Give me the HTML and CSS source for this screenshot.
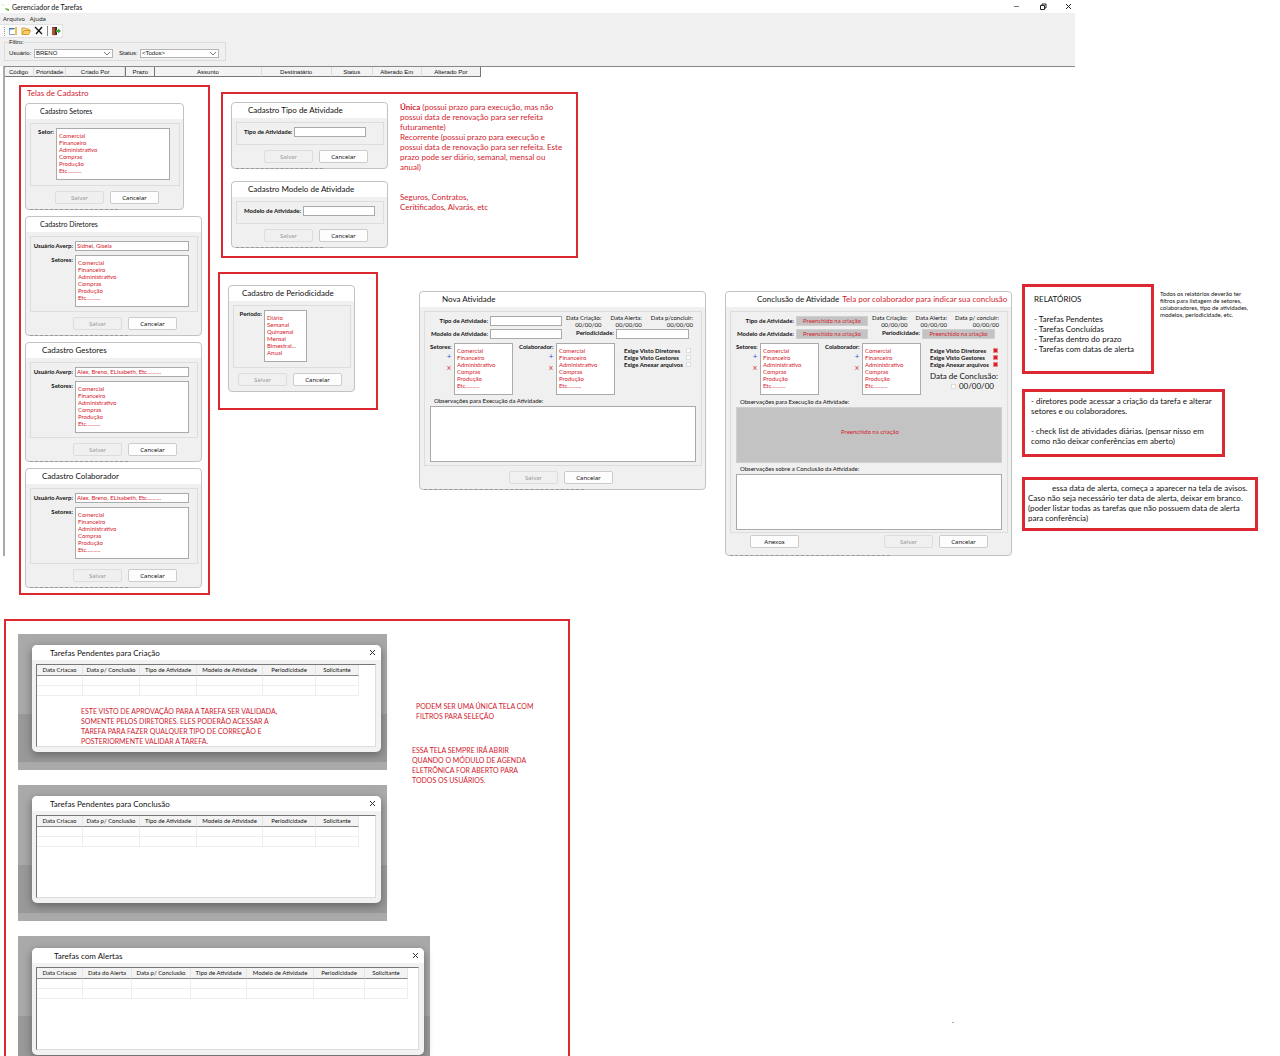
FILE: index.html
```html
<!DOCTYPE html>
<html lang="pt-BR">
<head>
<meta charset="utf-8">
<title>Gerenciador de Tarefas</title>
<link rel="stylesheet" href="styles.css">
</head>
<body>
<div class="page">
<header class="app">
  <div class="titlebar">
    <svg class="logo" width="10" height="8" viewBox="0 0 10 8"><path d="M0 1l4 2" stroke="#dfe8d8" fill="none"/><path d="M4 5l4 1v2l-3-1z" fill="#6cb33f"/></svg>
    <span class="apptitle">Gerenciador de Tarefas</span>
    <div class="winbtns">
      <svg width="8" height="8" viewBox="0 0 8 8"><path d="M1 3.500h5" stroke="#777" fill="none"/></svg>
      <svg width="8" height="8" viewBox="0 0 8 8"><path d="M1.500 2.500h4v4h-4zM3 2V1h4v4H6" stroke="#222" fill="none"/></svg>
      <svg width="8" height="8" viewBox="0 0 8 8"><path d="M1 1l5 5M6 1L1 6" stroke="#222" fill="none"/></svg>
    </div>
  </div>
  <nav class="menubar"><a href="#">Arquivo</a><a href="#">Ajuda</a></nav>
  <div class="toolbar">
    <i class="grip"></i>
    <button aria-label="Novo"><svg width="10" height="10" viewBox="0 0 10 10"><path d="M1.500 2.500h6v6h-6z" fill="#fff" stroke="#8ba3b8"/><path d="M1 2h5v1.500H1z" fill="#3b7fc4"/><path d="M7 1h2v8H7z" fill="#f0c050"/></svg></button>
    <button aria-label="Abrir"><svg width="10" height="10" viewBox="0 0 10 10"><path d="M1 8V2h3l1 1h3v2" fill="#fbe3a0" stroke="#d99a2b"/><path d="M1 8.500l2-4h6.500l-2 4z" fill="#f9cf6b" stroke="#d99a2b"/></svg></button>
    <button aria-label="Excluir"><svg width="10" height="10" viewBox="0 0 10 10"><path d="M1 1l7 7M8 1L2 8" stroke="#111" stroke-width="1.300" fill="none"/></svg></button>
    <i class="sep"></i>
    <button aria-label="Sair"><svg width="10" height="10" viewBox="0 0 10 10"><path d="M1 1h5v8H1z" fill="#333"/><path d="M1 1l3 1v7.500L1 9z" fill="#b5502e"/><path d="M5 4h2V2.500L10 5 7 7.500V6H5z" fill="#3ba53b"/></svg></button>
  </div>
  <fieldset class="filter">
    <legend>Filtro:</legend>
    <label for="fu">Usuário:</label><select id="fu"><option>BRENO</option></select>
    <label for="fs" class="second">Status:</label><select id="fs"><option>&lt;Todos&gt;</option></select>
  </fieldset>
</header>
<main class="sheet">
  <table class="tasks">
    <colgroup><col class="w30"><col class="w32"><col class="w59"><col class="w30"><col class="w106"><col class="w70"><col class="w41"><col class="w49"><col class="w59"></colgroup>
    <tr><th>Código</th><th>Prioridade</th><th>Criado Por</th><th class="cut">Prazo</th><th>Assunto</th><th>Destinatário</th><th>Status</th><th>Alterado Em</th><th>Alterado Por</th></tr>
  </table>

  <div class="board">
    <section class="group cadastros">
      <h2>Telas de Cadastro</h2>
      <form class="dlg setores">
        <h3 class="small">Cadastro Setores</h3>
        <div class="panel">
          <div class="row"><label for="s1">Setor:</label><textarea id="s1">Comercial
Financeiro
Administrativo
Compras
Produção
Etc..........</textarea></div>
        </div>
        <div class="actions"><button type="button" disabled>Salvar</button><button type="button">Cancelar</button></div>
      </form>
      <form class="dlg usuario">
        <h3 class="small">Cadastro Diretores</h3>
        <div class="panel">
          <div class="row"><label for="u2">Usuário Averp:</label><input id="u2" value="Sidnei, Gisela"></div>
          <div class="row"><label for="s2">Setores:</label><textarea id="s2">Comercial
Financeiro
Administrativo
Compras
Produção
Etc..........</textarea></div>
        </div>
        <div class="actions"><button type="button" disabled>Salvar</button><button type="button">Cancelar</button></div>
      </form>
      <form class="dlg usuario">
        <h3>Cadastro Gestores</h3>
        <div class="panel">
          <div class="row"><label for="u3">Usuário Averp:</label><input id="u3" value="Alex, Breno, ELisabeth, Etc.........."></div>
          <div class="row"><label for="s3">Setores:</label><textarea id="s3">Comercial
Financeiro
Administrativo
Compras
Produção
Etc..........</textarea></div>
        </div>
        <div class="actions"><button type="button" disabled>Salvar</button><button type="button">Cancelar</button></div>
      </form>
      <form class="dlg usuario">
        <h3>Cadastro Colaborador</h3>
        <div class="panel">
          <div class="row"><label for="u4">Usuário Averp:</label><input id="u4" value="Alex, Breno, ELisabeth, Etc.........."></div>
          <div class="row"><label for="s4">Setores:</label><textarea id="s4">Comercial
Financeiro
Administrativo
Compras
Produção
Etc..........</textarea></div>
        </div>
        <div class="actions"><button type="button" disabled>Salvar</button><button type="button">Cancelar</button></div>
      </form>
    </section>

    <div class="middle">
      <section class="group tipos">
        <div class="stack">
          <form class="dlg simple">
            <h3>Cadastro Tipo de Atividade</h3>
            <div class="panel"><div class="row"><label for="t1">Tipo de Atividade:</label><input id="t1"></div></div>
            <div class="actions"><button type="button" disabled>Salvar</button><button type="button">Cancelar</button></div>
          </form>
          <form class="dlg simple">
            <h3>Cadastro Modelo de Atividade</h3>
            <div class="panel"><div class="row"><label for="t2">Modelo de Atividade:</label><input id="t2"></div></div>
            <div class="actions"><button type="button" disabled>Salvar</button><button type="button">Cancelar</button></div>
          </form>
        </div>
        <div class="remarks">
          <p><b>Única</b> (possui prazo para execução, mas não<br>possui data de renovação para ser refeita<br>futuramente)<br>Recorrente (possui prazo para execução e<br>possui data de renovação para ser refeita. Este<br>prazo pode ser diário, semanal, mensal ou<br>anual)</p>
          <p>Seguros, Contratos,<br>Ceritificados, Alvarás, etc</p>
        </div>
      </section>
      <div class="second-row">
        <section class="group periodo">
          <form class="dlg">
            <h3>Cadastro de Periodicidade</h3>
            <div class="panel"><div class="row"><label for="p1">Período:</label><textarea id="p1">Diário
Semanal
Quinzenal
Mensal
Bimestral...
Anual</textarea></div></div>
            <div class="actions"><button type="button" disabled>Salvar</button><button type="button">Cancelar</button></div>
          </form>
        </section>

        <form class="dlg activity">
          <h3>Nova Atividade</h3>
          <div class="panel">
            <div class="heads">
              <label for="n1">Tipo de Atividade:</label><input id="n1">
              <div class="dates"><span>Data Criação:<br>00/00/00</span><span>Data Alerta:<br>00/00/00</span><span>Data p/concluir:<br>00/00/00</span></div>
              <label for="n2">Modelo de Atividade:</label><input id="n2">
              <div class="period"><label for="n3">Periodicidade:</label><input id="n3"></div>
            </div>
            <div class="lists">
              <div class="side"><label for="n4">Setores:</label><button type="button" class="add">+</button><button type="button" class="del">X</button></div>
              <textarea id="n4">Comercial
Financeiro
Administrativo
Compras
Produção
Etc..........</textarea>
              <div class="side wide"><label for="n5">Colaborador:</label><button type="button" class="add">+</button><button type="button" class="del">X</button></div>
              <textarea id="n5">Comercial
Financeiro
Administrativo
Compras
Produção
Etc..........</textarea>
              <div class="checks">
                <label>Exige Visto Diretores<input type="checkbox"></label>
                <label>Exige Visto Gestores<input type="checkbox"></label>
                <label>Exige Anexar arquivos<input type="checkbox"></label>
              </div>
            </div>
            <label class="obs" for="n6">Observações para Execução da Atividade:</label>
            <textarea class="memo" id="n6"></textarea>
          </div>
          <div class="actions"><button type="button" disabled>Salvar</button><button type="button">Cancelar</button></div>
        </form>
      </div>
    </div>

    <form class="dlg activity done">
      <h3>Conclusão de Atividade <em>Tela por colaborador para indicar sua conclusão</em></h3>
      <div class="panel">
        <div class="heads">
          <label for="c1">Tipo de Atividade:</label><input id="c1" class="filled" readonly value="Preenchido na criação">
          <div class="dates"><span>Data Criação:<br>00/00/00</span><span>Data Alerta:<br>00/00/00</span><span>Data p/ concluir:<br>00/00/00</span></div>
          <label for="c2">Modelo de Atividade:</label><input id="c2" class="filled" readonly value="Preenchido na criação">
          <div class="period"><label for="c3">Periodicidade:</label><input id="c3" class="filled" readonly value="Preenchido na criação"></div>
        </div>
        <div class="lists">
          <div class="side"><label for="c4">Setores:</label><button type="button" class="add">+</button><button type="button" class="del">X</button></div>
          <textarea id="c4">Comercial
Financeiro
Administrativo
Compras
Produção
Etc..........</textarea>
          <div class="side wide"><label for="c5">Colaborador:</label><button type="button" class="add">+</button><button type="button" class="del">X</button></div>
          <textarea id="c5">Comercial
Financeiro
Administrativo
Compras
Produção
Etc..........</textarea>
          <div class="checks">
            <label>Exige Visto Diretores<input type="checkbox" checked></label>
            <label>Exige Visto Gestores<input type="checkbox" checked></label>
            <label>Exige Anexar arquivos<input type="checkbox" checked></label>
            <div class="when">Data de Conclusão:<label><input type="checkbox">00/00/00</label></div>
          </div>
        </div>
        <label class="obs" for="c6">Observações para Execução da Atividade:</label>
        <textarea class="memo filled" id="c6" readonly>Preenchido na criação</textarea>
        <label class="obs" for="c7">Observações sobre a Conclusão da Atividade:</label>
        <textarea class="memo" id="c7"></textarea>
      </div>
      <div class="actions"><button type="button" class="attach">Anexos</button><button type="button" disabled>Salvar</button><button type="button">Cancelar</button></div>
    </form>

    <aside class="notes">
      <div class="pair">
        <div class="note reports"><p>RELATÓRIOS</p><p>- Tarefas Pendentes<br>- Tarefas Concluídas<br>- Tarefas dentro do prazo<br>- Tarefas com datas de alerta</p></div>
        <p class="tiny">Todos os relatórios deverão ter<br>filtros para listagem de setores,<br>colaboradores, tipo de atividades,<br>modelos, periodicidade, etc.</p>
      </div>
      <div class="note directors"><p>- diretores pode acessar a criação da tarefa e alterar<br>setores e ou colaboradores.</p><p>- check list de atividades diárias. (pensar nisso em<br>como não deixar conferências em aberto)</p></div>
      <div class="note alerts"><p>essa data de alerta, começa a aparecer na tela de avisos.<br>Caso não seja necessário ter data de alerta, deixar em branco.<br>(poder listar todas as tarefas que não possuem data de alerta<br>para conferência)</p></div>
    </aside>
  </div>
</main>

<div class="lower">
  <section class="group pending">
    <div class="shots">
      <div class="shot">
        <div class="win">
          <h3>Tarefas Pendentes para Criação<button class="close" aria-label="Fechar"><svg width="7" height="7" viewBox="0 0 7 7"><path d="M1 1l5 5M6 1L1 6" stroke="#333" fill="none"/></svg></button></h3>
          <div class="grid">
            <table><colgroup><col class="w46"><col class="w57"><col class="w57"><col class="w66"><col class="w53"><col class="w43"></colgroup>
              <tr><th>Data Criacao</th><th>Data p/ Conclusão</th><th>Tipo de Atividade</th><th>Modelo de Atividade</th><th>Periodicidade</th><th>Solicitante</th></tr>
              <tr><td></td><td></td><td></td><td></td><td></td><td></td></tr><tr><td></td><td></td><td></td><td></td><td></td><td></td></tr></table>
            <p class="caps">ESTE VISTO DE APROVAÇÃO PARA A TAREFA SER VALIDADA,<br>SOMENTE PELOS DIRETORES. ELES PODERÃO ACESSAR A<br>TAREFA PARA FAZER QUALQUER TIPO DE CORREÇÃO E<br>POSTERIORMENTE VALIDAR A TAREFA.</p>
          </div>
        </div>
      </div>
      <div class="shot">
        <div class="win">
          <h3>Tarefas Pendentes para Conclusão<button class="close" aria-label="Fechar"><svg width="7" height="7" viewBox="0 0 7 7"><path d="M1 1l5 5M6 1L1 6" stroke="#333" fill="none"/></svg></button></h3>
          <div class="grid">
            <table><colgroup><col class="w46"><col class="w57"><col class="w57"><col class="w66"><col class="w53"><col class="w43"></colgroup>
              <tr><th>Data Criacao</th><th>Data p/ Conclusão</th><th>Tipo de Atividade</th><th>Modelo de Atividade</th><th>Periodicidade</th><th>Solicitante</th></tr>
              <tr><td></td><td></td><td></td><td></td><td></td><td></td></tr><tr><td></td><td></td><td></td><td></td><td></td><td></td></tr></table>
          </div>
        </div>
      </div>
      <div class="shot alertas">
        <div class="win">
          <h3>Tarefas com Alertas<button class="close" aria-label="Fechar"><svg width="7" height="7" viewBox="0 0 7 7"><path d="M1 1l5 5M6 1L1 6" stroke="#333" fill="none"/></svg></button></h3>
          <div class="grid">
            <table><colgroup><col class="w46"><col class="w49"><col class="w59"><col class="w56"><col class="w67"><col class="w51"><col class="w43"></colgroup>
              <tr><th>Data Criacao</th><th>Data do Alerta</th><th>Data p/ Conclusão</th><th>Tipo de Atividade</th><th>Modelo de Atividade</th><th>Periodicidade</th><th>Solicitante</th></tr>
              <tr><td></td><td></td><td></td><td></td><td></td><td></td><td></td></tr><tr><td></td><td></td><td></td><td></td><td></td><td></td><td></td></tr></table>
          </div>
        </div>
      </div>
    </div>
    <div class="hints">
      <p class="caps first">PODEM SER UMA ÚNICA TELA COM<br>FILTROS PARA SELEÇÃO</p>
      <p class="caps">ESSA TELA SEMPRE IRÁ ABRIR<br>QUANDO O MÓDULO DE AGENDA<br>ELETRÔNICA FOR ABERTO PARA<br>TODOS OS USUÁRIOS.</p>
    </div>
  </section>
  <p class="dot">.</p>
</div>
</div>
</body>
</html>
```
FILE: styles.css
```css
* { box-sizing: border-box; }
body { margin: 0; background: #fff; color: #111; font: 8px/10px Lato, "Noto Sans", sans-serif; }
h2, h3, p { margin: 0; font-weight: normal; font-size: 8px; }
button, input, textarea, select { font-family: inherit; margin: 0; }
.page { height: 100vh; overflow: hidden; }

/* main window */
.app { width: 84%; background: #f0f0f0; height: 66px; }
.titlebar { display: flex; align-items: center; height: 13px; background: #fff; padding: 0 2px 0 1px; }
.apptitle { margin-left: 1px; font-size: 7px; }
.winbtns { margin-left: auto; display: flex; gap: 18px; }
.menubar { display: flex; gap: 5px; padding: 0 3px; height: 11px; align-items: center; font: 6px/8px "Noto Sans", sans-serif; }
.menubar a { color: #222; text-decoration: none; }
.toolbar { display: flex; align-items: center; gap: 3px; width: 63px; height: 14px; padding-left: 4px; background: #fafafa; border: 1px solid #e2e2e2; border-left: 0; }
.toolbar button { width: 10px; height: 10px; padding: 0; border: 0; background: none; }
.toolbar svg { display: block; }
.grip { height: 9px; border-left: 1px dotted #999; }
.sep { height: 10px; border-left: 1px solid #888; }
.filter { display: flex; align-items: center; width: 222px; height: 22px; margin: 1px 0 0 4px; padding: 0 4px; border: 1px solid #dcdcdc; font: 6px/7px "Liberation Sans", sans-serif; }
.filter legend { padding: 0; font-size: 6px; line-height: 7px; }
.filter label { width: 25px; flex: none; }
.filter .second { margin-left: 6px; width: 21px; }
.filter select { width: 79px; height: 9px; padding: 0 1px; border: 1px solid #b5b5b5; border-radius: 0; appearance: none; font: 6px/7px "Liberation Sans", sans-serif; color: #111;
  background: linear-gradient(45deg, transparent 40%, #777 40% 65%, transparent 65%) no-repeat right 5px center / 3px 3px, linear-gradient(-45deg, transparent 40%, #777 40% 65%, transparent 65%) no-repeat right 2px center / 3px 3px, #fff; }

.sheet { position: relative; }
.sheet::before { content: ""; position: absolute; left: 3px; top: 0; width: 2px; height: 490px; background: #aaa; }
.sheet::after { content: ""; position: absolute; left: 4px; top: 0; width: calc(84% - 4px); height: 1px; background: #888; }
.tasks { margin-left: 4px; width: 477px; table-layout: fixed; border-collapse: separate; border-spacing: 0; }
.tasks th { height: 11px; padding: 1px 0 0; background: #f3f3f3; border-bottom: 1px solid #777; border-right: 1px solid #ddd; font: 6px/8px "Liberation Sans", sans-serif; white-space: nowrap; }
.tasks th.cut, .tasks th:last-child { border-right-color: #777; }
.tasks th.cut { border-left: 1px solid #777; }

/* board */
.board { display: flex; align-items: flex-start; padding: 8px 0 0 19px; }
.board > * { flex: none; }
.group { border: 2px solid #dc2830; }
.cadastros { width: 191px; height: 510px; padding: 1px 0 0 4px; display: flex; flex-direction: column; align-items: flex-start; gap: 6px; }
.cadastros h2 { line-height: 10px; color: #d3202c; padding-left: 2px; margin-bottom: -1px; }
.dlg { position: relative; background: #f0f0f0; border: 1px solid #c2c2c2; border-radius: 4px; }
.dlg::after { content: ""; position: absolute; left: 4px; bottom: -1px; width: 56%; border-bottom: 1px dashed #999; }
.dlg h3 { height: 15px; padding: 1px 0 0 16px; line-height: 12px; background: #fff; border-radius: 4px 4px 0 0; white-space: nowrap; }
.dlg h3.small { font-size: 7px; padding-left: 14px; }
.panel { margin: 4px 3px 0 4px; border: 1px solid #ddd; }
.row { display: flex; align-items: flex-start; }
.dlg label { font-weight: bold; font-size: 6px; line-height: 8px; white-space: nowrap; }
.row label { text-align: right; padding-right: 2px; flex: none; }
.dlg input { height: 10px; min-width: 0; padding: 0 1px 1px; border: 1px solid #aaa; border-radius: 0; background: #fff; color: #d3202c; font-size: 6px; line-height: 7px; }
.dlg textarea { display: block; height: 52px; padding: 3px 0 0 2px; border: 1px solid #aaa; border-radius: 0; background: #fff; color: #d3202c; font-size: 6px; line-height: 7px; resize: none; overflow: hidden; white-space: pre; }
.actions { display: flex; gap: 6px; padding-top: 5px; height: 23px; }
.actions button { width: 49px; height: 13px; padding: 0; border: 1px solid #ccc; border-radius: 2px; background: #fdfdfd; color: #111; font: 6px/10px "Noto Sans", sans-serif; }
.actions button:disabled { background: #f0f0f0; border-color: #ddd; color: #999; }

.setores { width: 159px; }
.setores .panel { padding: 4px 0; height: 63px; }
.setores label { width: 25px; }
.setores textarea { width: 114px; }
.setores .actions { padding-left: 29px; }
.usuario { width: 177px; }
.usuario .panel { height: 76px; padding-top: 4px; display: grid; gap: 4px; align-content: start; }
.usuario label { width: 44px; padding-top: 1px; }
.usuario input, .usuario textarea { width: 114px; }
.usuario .actions { padding-left: 47px; }

.middle { margin-left: 8px; }
.tipos { width: 357px; margin: 7px 0 0 3px; height: 166px; padding: 8px 0 0 8px; display: flex; gap: 12px; }
.stack { display: grid; gap: 12px; align-content: start; }
.simple { width: 157px; }
.simple .panel { padding: 4px 0 0 7px; height: 23px; }
.simple .row { align-items: center; }
.simple input { width: 72px; }
.simple .actions { padding-left: 32px; }
.remarks { color: #d3202c; display: grid; gap: 20px; align-content: start; white-space: nowrap; }
.second-row { display: flex; align-items: flex-start; margin-top: 14px; }
.periodo { width: 160px; height: 138px; padding: 11px 0 0 8px; }
.periodo .dlg { width: 127px; }
.periodo .dlg::after { display: none; }
.periodo h3 { padding-left: 13px; }
.periodo .panel { height: 63px; padding-top: 4px; }
.periodo .row label { width: 30px; }
.periodo textarea { width: 43px; }
.periodo .actions { padding-left: 9px; }

/* activity dialogs */
.activity { width: 287px; margin: 19px 0 0 41px; }
.activity h3 { padding-left: 22px; }
.activity .panel { padding: 4px 5px 3px; }
.heads { display: grid; grid-template-columns: 60px 72px 1fr; row-gap: 3px; align-items: center; }
.heads > label, .period label { text-align: right; padding-right: 2px; }
.dates { display: flex; justify-content: space-between; padding: 0 3px 0 4px; height: 10px; align-items: center; font-size: 6px; line-height: 7px; text-align: right; white-space: nowrap; }
.period { display: flex; }
.period label { flex: 1; }
.period input { width: 73px; margin-right: 7px; }
.lists { display: flex; align-items: flex-start; padding-top: 4px; }
.lists textarea { width: 59px; flex: none; }
.side { width: 24px; flex: none; display: grid; justify-items: end; }
.side label { width: 100%; }
.side.wide { width: 43px; padding-left: 6px; }
.side button { width: 10px; height: 11px; padding: 0; border: 0; background: none; font-size: 8px; line-height: 11px; }
.side .add { color: #3355cc; }
.side .del { color: #d3202c; font-size: 6px; }
.checks { flex: 1; padding: 4px 5px 0 9px; }
.checks > label { display: flex; justify-content: space-between; align-items: center; height: 7px; }
.dlg .checks input { appearance: none; width: 5px; height: 5px; padding: 0; border: 1px solid #ddd; background: #fff; }
.dlg .checks input:checked { background: #d3202c; border-color: #e88; }
.dlg label.obs { display: block; padding-left: 4px; font-weight: normal; line-height: 11px; }
.dlg .memo { width: 100%; height: 56px; }
.activity .actions { padding-left: 89px; }

.done { margin: 206px 0 0 19px; }
.done h3 { padding-left: 31px; }
.done em { font-style: normal; color: #d3202c; margin-left: 1px; }
.dlg .filled { background: #c3c3c3; border-color: #cfcfcf; text-align: center; }
.dlg .memo.filled { padding-top: 20px; }
.when { margin-top: 3px; line-height: 10px; text-align: right; white-space: nowrap; }
.when label { display: flex; justify-content: flex-end; align-items: center; gap: 3px; padding-right: 4px; }
.dlg .when label { font-size: 8px; font-weight: normal; line-height: 10px; }
.done .lists { height: 57px; }
.done .panel { padding-bottom: 2px; }
.done .actions { padding: 2px 0 0 24px; height: 22px; }
.done .attach { margin-right: 79px; }

/* notes */
.notes { margin: 199px 0 0 10px; }
.pair { display: flex; gap: 6px; }
.note { border: 3px solid #dc2830; white-space: nowrap; }
.note p + p { margin-top: 10px; }
.reports { width: 132px; height: 90px; padding: 7px 0 0 9px; }
.tiny { font-size: 6px; line-height: 7px; padding-top: 6px; white-space: nowrap; }
.directors { width: 203px; height: 68px; margin-top: 15px; padding: 4px 0 0 6px; }
.alerts { width: 236px; height: 54px; margin-top: 20px; padding: 3px 0 0 3px; }
.alerts p { text-indent: 24px; }

/* pending task windows */
.lower { display: flex; margin: 24px 0 0 4px; }
.pending { width: 566px; height: 470px; padding: 13px 0 0 12px; display: flex; }
.shots { display: grid; gap: 15px; align-content: start; width: 412px; }
.shot { width: 369px; height: 136px; padding: 11px 6px 0 14px; background: linear-gradient(#a9a9a9 0 80px, #999 80px 128px, #aaa 128px); }
.shot.alertas { width: 412px; padding-top: 12px; }
.win { height: 107px; padding: 0 5px 0 4px; background: #f2f2f2; border-radius: 5px; box-shadow: 0 3px 9px #666; }
.win h3 { display: flex; align-items: center; justify-content: space-between; height: 15px; margin: 0 -5px 4px -4px; padding: 0 4px 0 18px; background: #fff; border-radius: 5px 5px 0 0; }
.alertas .win h3 { padding-left: 22px; }
.close { width: 9px; height: 9px; padding: 0; border: 0; background: none; display: grid; place-items: center; }
.grid { height: 83px; background: #fff; border: 1px solid #ddd; border-top-color: #777; border-left-color: #777; }
.grid table { table-layout: fixed; width: 0; border-collapse: separate; border-spacing: 0; }
.grid th { height: 11px; padding: 0; background: #f3f3f3; border-bottom: 1px solid #888; border-right: 1px solid #e5e5e5; font-size: 6px; line-height: 8px; font-weight: normal; white-space: nowrap; }
.grid td { height: 10px; padding: 0; border-bottom: 1px solid #eee; border-right: 1px solid #eee; }
.grid p { margin: 10px 0 0 44px; }
.caps { color: #d3202c; font-size: 7px; white-space: nowrap; }
.hints { padding-top: 67px; margin-left: -18px; }
.hints p + p { margin-top: 24px; }
.hints .first { padding-left: 4px; }
.dot { margin: 396px 0 0 382px; }

.w30 { width: 30px; } .w32 { width: 32px; } .w59 { width: 59px; } .w106 { width: 106px; } .w70 { width: 70px; } .w41 { width: 41px; } .w49 { width: 49px; }
.w46 { width: 46px; } .w57 { width: 57px; } .w66 { width: 66px; } .w53 { width: 53px; } .w43 { width: 43px; } .w56 { width: 56px; } .w67 { width: 67px; } .w51 { width: 51px; }
```
